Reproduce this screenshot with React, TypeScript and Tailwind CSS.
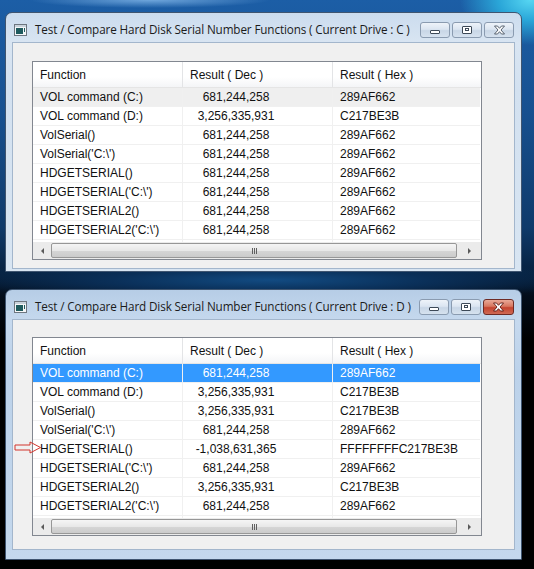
import React from "react";

type Row = [string, string, string];

const ROWS_C: Row[] = [
  ["VOL command (C:)", "681,244,258", "289AF662"],
  ["VOL command (D:)", "3,256,335,931", "C217BE3B"],
  ["VolSerial()", "681,244,258", "289AF662"],
  ["VolSerial('C:\\')", "681,244,258", "289AF662"],
  ["HDGETSERIAL()", "681,244,258", "289AF662"],
  ["HDGETSERIAL('C:\\')", "681,244,258", "289AF662"],
  ["HDGETSERIAL2()", "681,244,258", "289AF662"],
  ["HDGETSERIAL2('C:\\')", "681,244,258", "289AF662"],
];

const ROWS_D: Row[] = [
  ["VOL command (C:)", "681,244,258", "289AF662"],
  ["VOL command (D:)", "3,256,335,931", "C217BE3B"],
  ["VolSerial()", "3,256,335,931", "C217BE3B"],
  ["VolSerial('C:\\')", "681,244,258", "289AF662"],
  ["HDGETSERIAL()", "-1,038,631,365", "FFFFFFFFC217BE3B"],
  ["HDGETSERIAL('C:\\')", "681,244,258", "289AF662"],
  ["HDGETSERIAL2()", "3,256,335,931", "C217BE3B"],
  ["HDGETSERIAL2('C:\\')", "681,244,258", "289AF662"],
];

// 小窗口图标
const AppIcon = () => (
  <svg width="13" height="12" viewBox="0 0 13 12">
    <rect x="0.5" y="0.5" width="12" height="11" fill="#f4f6f8" stroke="#6d7680" />
    <rect x="1" y="1" width="11" height="2" fill="#c9d3dc" />
    <rect x="2" y="4" width="7" height="6" fill="#1f5b5e" />
    <rect x="10" y="4" width="1" height="4" fill="#1f5b5e" />
  </svg>
);

const CaptionButton = ({ kind, active }: { kind: "min" | "max" | "close"; active: boolean }) => {
  const isClose = kind === "close";
  const red = isClose && active;
  return (
    <div
      className={
        red
          ? "flex h-[16px] w-[31px] items-center justify-center rounded-[3px] border border-[#6e2a24] bg-[linear-gradient(180deg,#e9a998_0%,#d7765f_45%,#c4432f_55%,#cf6a55_100%)]"
          : "flex h-[16px] w-[30px] items-center justify-center rounded-[3px] border border-[#8a9bb0] bg-[linear-gradient(180deg,#eef3f9_0%,#dbe5f1_45%,#c8d6e6_55%,#d6e2ef_100%)]"
      }
    >
      {kind === "min" && <div className="mt-[4px] h-[4px] w-[10px] rounded-[1px] border border-[#3d4957] bg-white" />}
      {kind === "max" && (
        <div className="h-[8px] w-[10px] rounded-[1px] border border-[#3d4957] bg-white">
          <div className="mx-auto mt-[1px] h-[3px] w-[4px] border border-[#3d4957]" />
        </div>
      )}
      {isClose && (
        <svg width="13" height="10" viewBox="0 0 13 10">
          <path
            d="M1.5 1 L4.5 1 L6.5 3.3 L8.5 1 L11.5 1 L8 5 L11.5 9 L8.5 9 L6.5 6.7 L4.5 9 L1.5 9 L5 5 Z"
            fill="#ffffff"
            stroke={red ? "#5a1a14" : "#4a5563"}
            strokeWidth="0.9"
            strokeLinejoin="round"
          />
        </svg>
      )}
    </div>
  );
};

const ListView = ({ rows, active }: { rows: Row[]; active: boolean }) => (
  <div className="flex h-[199px] w-[450px] flex-col border border-[#828790] bg-white font-['Liberation_Sans',Arial,sans-serif] text-[12px] text-[#111]">
    {/* 表头 */}
    <div className="grid h-[26px] shrink-0 grid-cols-[150px_150px_1fr] border-b border-[#e5e5e5] bg-[linear-gradient(180deg,#ffffff_0%,#ffffff_60%,#f4f5f7_100%)]">
      <div className="flex items-center border-r border-[#e3e4e6] pl-[7px]">Function</div>
      <div className="flex items-center border-r border-[#e3e4e6] pl-[7px]">Result ( Dec )</div>
      <div className="flex items-center pl-[7px]">Result ( Hex )</div>
    </div>
    <div className="flex-1 overflow-hidden">
      {rows.map((r, i) => {
        const sel = i === 0;
        const rowCls = sel
          ? active
            ? "bg-[#3399ff] text-white"
            : "bg-[#efefef]"
          : "";
        return (
          <div
            key={i}
            className={`grid h-[19px] grid-cols-[150px_150px_1fr] mr-[1px] ${rowCls}`}
          >
            <div className="flex items-center border-b border-r border-[#f0f0f0] pl-[7px]">{r[0]}</div>
            <div className="flex items-center border-b border-r border-[#f0f0f0]">
              <span className="w-[106px] text-center">{r[1]}</span>
            </div>
            <div className="flex items-center border-b border-[#f0f0f0] pl-[7px]">{r[2]}</div>
          </div>
        );
      })}
      <div className="grid h-[4px] grid-cols-[150px_150px_1fr]">
        <div className="border-r border-[#f0f0f0]" />
        <div className="border-r border-[#f0f0f0]" />
        <div />
      </div>
    </div>
    {/* 水平滚动条 */}
    <div className="flex h-[17px] shrink-0 items-center bg-[#ebebeb]">
      <div className="flex w-[18px] items-center justify-center">
        <div className="h-0 w-0 border-y-[3px] border-r-[3px] border-y-transparent border-r-[#5a5a5a]" />
      </div>
      <div className="flex h-[15px] w-[406px] items-center justify-center rounded-[2px] border border-[#979797] bg-[linear-gradient(180deg,#f5f5f5_0%,#e8e8e8_50%,#d6d6d6_51%,#cbcbcb_100%)]">
        <div className="flex gap-[1px]">
          <div className="h-[6px] w-[1px] bg-[#5f5f5f]" />
          <div className="h-[6px] w-[1px] bg-[#5f5f5f]" />
          <div className="h-[6px] w-[1px] bg-[#5f5f5f]" />
        </div>
      </div>
      <div className="flex flex-1 items-center justify-center">
        <div className="h-0 w-0 border-y-[3px] border-l-[3px] border-y-transparent border-l-[#5a5a5a]" />
      </div>
    </div>
  </div>
);

const Window = ({
  drive,
  rows,
  active,
  clientH,
  listTop,
  bottomFrame,
  arrowRow,
}: {
  drive: string;
  rows: Row[];
  active: boolean;
  clientH: string;
  listTop: string;
  bottomFrame: string;
  arrowRow?: number;
}) => (
  <div
    className={`flex w-[517px] flex-col rounded-t-[7px] border border-[#3f5570] ${
      active
        ? "bg-[linear-gradient(180deg,#b6cde6_0%,#c6d9ee_12%,#bcd2ea_30%,#c4d8ed_100%)]"
        : "bg-[linear-gradient(180deg,#cbdcee_0%,#d9e5f2_12%,#d3e1f0_30%,#d8e5f2_100%)]"
    } ${bottomFrame}`}
  >
    <div className="flex h-[29px] items-center pl-[8px] pr-[7px] pt-[4px]">
      <AppIcon />
      <span className="ml-[8px] font-['Open_Sans','Noto_Sans',sans-serif] text-[11.7px] tracking-[-0.12px] text-[#1b1b1b]">
        Test / Compare Hard Disk Serial Number Functions ( Current Drive : {drive} )
      </span>
      <div className="ml-auto flex gap-[2px]">
        <CaptionButton kind="min" active={active} />
        <CaptionButton kind="max" active={active} />
        <CaptionButton kind="close" active={active} />
      </div>
    </div>
    <div className={`relative mx-[6px] border border-[#a3b6cc] bg-[#f0f0f0] pl-[19px] ${clientH} ${listTop}`}>
      <ListView rows={rows} active={active} />
      {arrowRow !== undefined && (
        <svg
          className="absolute left-[1px]"
          style={{ top: 18 + 25 + arrowRow * 19 + 2 }}
          width="28"
          height="13"
          viewBox="0 0 28 13"
        >
          <path
            d="M1 4 L16 4 L16 1 L26.5 6.5 L16 12 L16 9 L1 9 Z"
            fill="none"
            stroke="#d2352d"
            strokeWidth="1"
            strokeLinejoin="miter"
          />
        </svg>
      )}
    </div>
  </div>
);

export default function App() {
  return (
    <div className="flex h-[569px] w-[534px] flex-col overflow-hidden bg-[radial-gradient(ellipse_70px_45px_at_530px_0px,#56d6f2_0%,#2aa6d8_45%,transparent_100%),radial-gradient(ellipse_120px_8px_at_150px_0px,#6fa6dc_0%,transparent_100%),radial-gradient(ellipse_320px_22px_at_270px_280px,#124b82_0%,#0a2f58_50%,transparent_100%),linear-gradient(180deg,#1c5ea6_0%,#17508f_20%,#0f3a6a_40%,#07213f_48%,#030d1a_52%,#000000_60%,#000000_100%)] pl-[5px] pt-[12px]">
      <Window drive="C" rows={ROWS_C} active={false} clientH="h-[227px]" listTop="pt-[18px]" bottomFrame="pb-[2px]" />
      <div className="h-[17px]" />
      <Window
        drive="D"
        rows={ROWS_D}
        active={true}
        clientH="h-[231px]"
        listTop="pt-[17px]"
        bottomFrame="pb-[9px]"
        arrowRow={4}
      />
    </div>
  );
}
